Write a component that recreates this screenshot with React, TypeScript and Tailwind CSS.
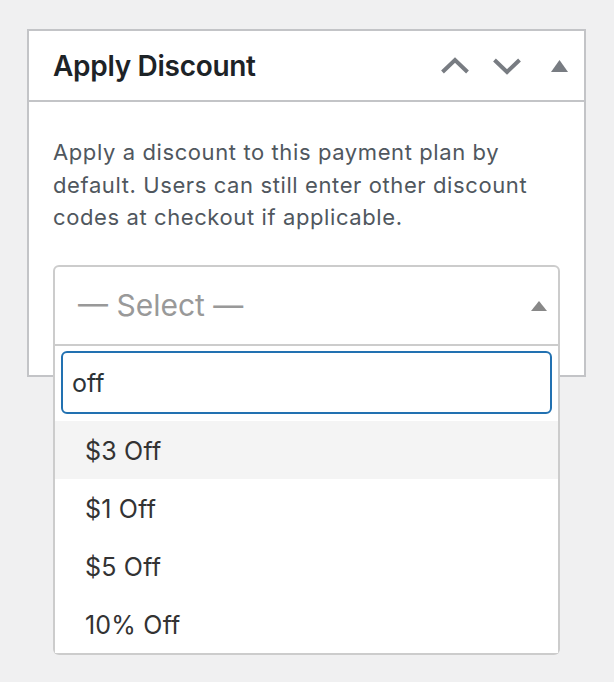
const options = ["$3 Off", "$1 Off", "$5 Off", "10% Off"];

export default function App() {
  return (
    <div className="min-h-screen bg-[#f0f0f1] pt-[29px] pl-[27px] font-['Inter',sans-serif]">
      <div className="w-[559px] border-2 border-[#c3c4c7] bg-white">
        <div className="flex h-[71px] items-center justify-between border-b-2 border-[#c3c4c7] pl-[24px] pr-[16px]">
          <h2 className="text-[28px] font-semibold tracking-[-0.3px] text-[#1d2327]">Apply Discount</h2>
          <div className="flex items-center">
            <svg width="28" height="18" viewBox="0 0 28 18" className="mr-[24px]">
              <polyline points="1.5,15 14,3 26.5,15" fill="none" stroke="#787c82" strokeWidth="4" />
            </svg>
            <svg width="28" height="18" viewBox="0 0 28 18" className="mr-[30px]">
              <polyline points="1.5,3 14,15 26.5,3" fill="none" stroke="#787c82" strokeWidth="4" />
            </svg>
            <svg width="17" height="12" viewBox="0 0 17 12">
              <polygon points="8.5,0 17,12 0,12" fill="#787c82" />
            </svg>
          </div>
        </div>
        <div className="px-[24px] pt-[34px] pb-[29px]">
          <p className="text-[22px] leading-[32.5px] tracking-[0.6px] text-[#50575e]">
            Apply a discount to this payment plan by default. Users can still enter other discount codes at checkout if applicable.
          </p>
          <div className="relative mt-[31px]">
            <div className="flex h-[81px] items-center justify-between rounded-t-[6px] border-2 border-[#cccccc] pl-[23px] pr-[11px]">
              <span className="text-[30px] text-[#999999]">— Select —</span>
              <svg width="16" height="10" viewBox="0 0 16 10" className="mt-[2px]">
                <polygon points="8,0 16,10 0,10" fill="#888888" />
              </svg>
            </div>
            <div className="absolute left-0 right-0 top-full z-10 rounded-b-[6px] border-2 border-t-0 border-[#cccccc] bg-white pt-[5px]">
              <div className="mx-[6px] mb-[7px] flex h-[63px] items-center rounded-[6px] border-2 border-[#2271b1] px-[9px] pt-[3px] text-[25px] text-[#2c3338]">
                off
              </div>
              {options.map((o, i) => (
                <div
                  key={o}
                  className={
                    "flex h-[58px] items-center pl-[30px] pt-[4px] text-[25px] tracking-[0.2px] text-[#333333] " +
                    (i === 0 ? "bg-[#f4f4f4]" : "bg-white")
                  }
                >
                  {o}
                </div>
              ))}
            </div>
          </div>
        </div>
      </div>
    </div>
  );
}
